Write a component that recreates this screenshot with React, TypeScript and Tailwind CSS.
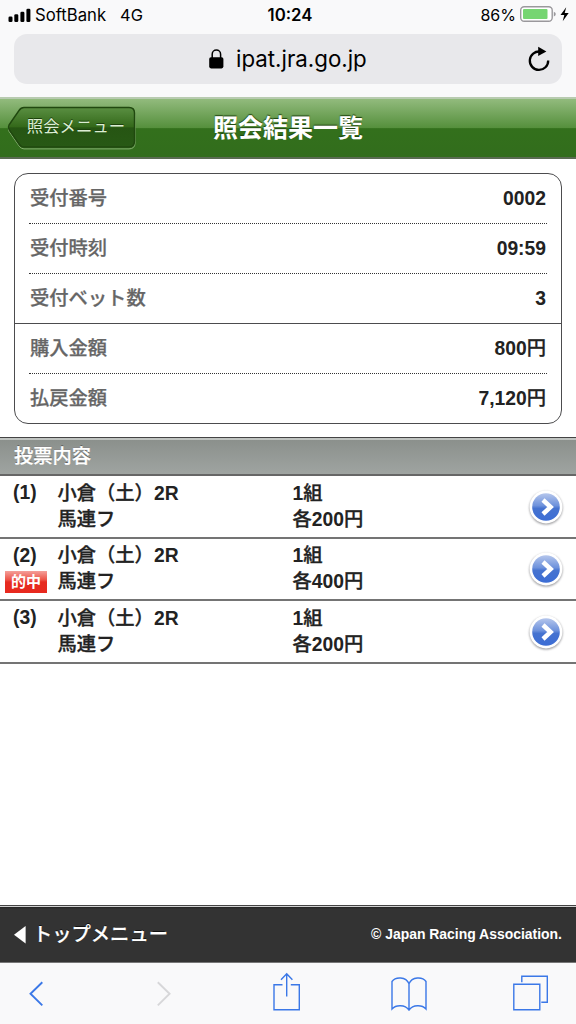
import React from "react";

const details = [
  { label: "受付番号", value: "0002", unit: "", line: "dotted" },
  { label: "受付時刻", value: "09:59", unit: "", line: "dotted" },
  { label: "受付ベット数", value: "3", unit: "", line: "solid" },
  { label: "購入金額", value: "800", unit: "円", line: "dotted" },
  { label: "払戻金額", value: "7,120", unit: "円", line: "none" },
];

const bets = [
  { no: "(1)", hit: false, amount: "200" },
  { no: "(2)", hit: true, amount: "400" },
  { no: "(3)", hit: false, amount: "200" },
];

function StatusBar() {
  return (
    <div className="flex h-[34px] items-start justify-between pl-[8px] pr-[5px] pt-[4px] font-['Inter',sans-serif] text-[17px] leading-[22px] text-black">
      <div className="flex w-[230px] items-center">
        <svg width="23" height="14" viewBox="0 0 23 14" className="-mt-px shrink-0">
          <rect x="0.5" y="8.5" width="4" height="5.5" rx="1.3" />
          <rect x="6.3" y="6.3" width="4" height="7.7" rx="1.3" />
          <rect x="12.4" y="3.8" width="4" height="10.2" rx="1.3" />
          <rect x="18.4" y="0.8" width="4" height="13.2" rx="1.3" />
        </svg>
        <span className="ml-[4px] text-[16.7px]">SoftBank</span>
        <span className="ml-[14px] text-[16.4px]">4G</span>
      </div>
      <span className="pl-px text-[16.8px] font-semibold">10:24</span>
      <div className="flex w-[230px] items-center justify-end">
        <span className="text-[16px]">86%</span>
        <svg width="52" height="20" viewBox="0 0 52 20" className="ml-[3px] shrink-0">
          <rect x="1.7" y="1.7" width="31.5" height="14.6" rx="3.5" fill="#fff" stroke="#9a989c" strokeWidth="1.4" />
          <rect x="4" y="4" width="24.5" height="10" rx="1" fill="#76d572" />
          <path d="M34.8 6.8q2 .6 2 2.3t-2 2.3z" fill="#9a989c" />
          <path d="M47.2 2.3L41.5 10.1h3.8l-1.6 6.2 6-8.2h-4z" fill="#000" />
        </svg>
      </div>
    </div>
  );
}

function AddressBar() {
  return (
    <div className="mx-[14px] flex h-[50px] items-center rounded-[13px] bg-[#e8e8eb] pl-[194.5px] pr-[11px]">
      <svg width="15" height="20" viewBox="0 0 15 20" className="shrink-0">
        <path d="M3.2 9V5.3a4.2 4.2 0 0 1 8.4 0V9" fill="none" stroke="#000" strokeWidth="1.5" />
        <rect x="0.2" y="8.2" width="14.2" height="11.2" rx="1.8" />
      </svg>
      <span className="ml-[12.5px] font-['Inter',sans-serif] text-[22.3px] text-black">ipat.jra.go.jp</span>
      <svg width="24" height="26" viewBox="0 0 24 26" className="ml-auto shrink-0">
        <path d="M13.2 5.6A9.2 9.2 0 1 0 21.2 14.5" fill="none" stroke="#000" strokeWidth="2.3" />
        <path d="M11.2 .8L19.4 5.4 11.2 10z" />
      </svg>
    </div>
  );
}

function TitleBar() {
  return (
    <header className="relative mt-[13px] flex h-[62px] items-center justify-center border-b-2 border-t-2 border-b-[#5a6b52] border-t-[#b8cbb0] bg-[linear-gradient(to_bottom,#92bb7d_0%,#558f3c_50%,#33701c_51%,#326d1c_100%)] pt-px">
      <button className="absolute left-[7px] top-[7px] h-[44px] w-[129px] pl-[9px] text-[16.4px] text-[#dcedd3]">
        <svg width="129" height="44" viewBox="0 0 129 44" className="absolute left-0 top-0">
          <defs>
            <linearGradient id="back" x1="0" y1="0" x2="0" y2="1">
              <stop offset="0" stopColor="#5a8f42" />
              <stop offset=".5" stopColor="#336819" />
              <stop offset=".51" stopColor="#265513" />
              <stop offset="1" stopColor="#285915" />
            </linearGradient>
          </defs>
          <path d="M17 2H122Q128 2 128 8V36Q128 42 122 42H17Q14 42 12 39L2 24.5Q.8 22 2 19.5L12 5Q14 2 17 2Z" transform="translate(0 .9)" fill="none" stroke="#86ae72" strokeWidth="1" />
          <path d="M17 1.5H122Q127.5 1.5 127.5 7V35Q127.5 41 122 41H17Q14 41 12 38L2 23.5Q.8 21 2 19L12 4.5Q14 1.5 17 1.5Z" fill="url(#back)" stroke="#20480f" strokeWidth="1.4" />
        </svg>
        <span className="relative -top-[2px] whitespace-nowrap [text-shadow:0_-1px_0_#1d420d]">照会メニュー</span>
      </button>
      <h1 className="text-[25px] font-bold leading-none text-white [text-shadow:0_-1px_1px_#1d420d]">照会結果一覧</h1>
    </header>
  );
}

function DetailCard() {
  return (
    <section className="mx-[14px] mt-[14px] h-[251px] rounded-[14px] border border-[#4c4c4e]">
      {details.map((row) => (
        <div key={row.label} className={row.line === "solid" ? "h-[50px] border-b border-[#4c4c4e] px-[14px]" : "h-[50px] px-[14px]"}>
          <div className={row.line === "dotted" ? "flex h-[50px] items-center justify-between border-b border-dotted border-[#333] px-px" : "flex h-[50px] items-center justify-between px-px"}>
            <span className="pt-px text-[19.3px] font-medium text-[#666] [-webkit-text-stroke:0.25px_#666]">{row.label}</span>
            <span className="pt-px text-[19.3px] font-bold text-[#222]">{row.value}<span className="font-medium [-webkit-text-stroke:0.3px_#222]">{row.unit}</span></span>
          </div>
        </div>
      ))}
    </section>
  );
}

function NextIcon() {
  return (
    <svg width="40" height="42" viewBox="0 0 40 42" className="ml-auto mr-[10px] mt-[10.5px] shrink-0">
      <defs>
        <linearGradient id="disc" x1="0" y1="0" x2="0" y2="1">
          <stop offset="0" stopColor="#b5c6ec" />
          <stop offset=".45" stopColor="#6e92dc" />
          <stop offset=".55" stopColor="#4673d0" />
          <stop offset="1" stopColor="#3c6dd5" />
        </linearGradient>
        <filter id="shade" x="-20%" y="-20%" width="140%" height="140%">
          <feGaussianBlur stdDeviation="1.1" />
        </filter>
      </defs>
      <circle cx="20" cy="21" r="16.5" fill="#78787c" opacity=".75" filter="url(#shade)" />
      <circle cx="20" cy="20" r="16.4" fill="#fff" />
      <circle cx="20" cy="20" r="13.8" fill="url(#disc)" />
      <path d="M17 13L24.6 20L17 27" fill="none" stroke="#fff" strokeWidth="4.5" />
    </svg>
  );
}

function BetRow({ no, hit, amount }: { no: string; hit: boolean; amount: string }) {
  return (
    <li className="flex h-[62.5px] border-b-2 border-[#747474] text-[19.3px] font-bold leading-[26.3px] text-[#222]">
      <div className="flex w-[57.5px] shrink-0 flex-col pt-[4px]">
        <span className="pl-[13px]">{no}</span>
        {hit && (
          <span className="ml-[5px] mt-[2px] flex h-[22px] w-[42px] items-center justify-center bg-[linear-gradient(to_bottom,#f4a09a_0%,#ed5347_40%,#e62b20_50%,#e8291e_100%)] text-[15px] leading-none text-white">的中</span>
        )}
      </div>
      <div className="w-[235px] shrink-0 pt-[4.5px]">
        <div><span className="font-medium [-webkit-text-stroke:0.35px_#222]">小倉（土）</span>2R</div>
        <div className="font-medium [-webkit-text-stroke:0.35px_#222]">馬連フ</div>
      </div>
      <div className="pt-[4.5px]">
        <div>1<span className="font-medium [-webkit-text-stroke:0.35px_#222]">組</span></div>
        <div><span className="font-medium [-webkit-text-stroke:0.35px_#222]">各</span>{amount}<span className="font-medium [-webkit-text-stroke:0.35px_#222]">円</span></div>
      </div>
      <NextIcon />
    </li>
  );
}

function BrowserToolbar() {
  return (
    <nav className="flex h-[61px] items-start bg-[#f9f9fa] pt-[8px] text-[#3b78e7]">
      <svg width="576" height="50" viewBox="0 0 576 50" fill="none" stroke="currentColor" strokeWidth="1.4">
        <path d="M42.3 11.2L30.5 22.8L42.3 34.4" strokeWidth="1.9" />
        <path d="M157.8 11.2L169.6 22.8L157.8 34.4" stroke="#d7d7d9" strokeWidth="1.9" />
        <path d="M282.5 13.8h-8.5v25h25.3v-25h-8.5M286.7 25.5V2.8M281 8.8l5.7-6 5.7 6" />
        <path d="M409 12.8C406 5.5 395.5 5.5 392 10.5V38C396 33.5 405 33.5 409 39C413 33.5 422 33.5 426 38V10.5C422.5 5.5 412 5.5 409 12.8ZM409 12.8V39" />
        <path d="M513.8 13.2h26v25.6h-26zM521.8 11.2V5.2h25.5v26h-6" />
      </svg>
    </nav>
  );
}

export default function App() {
  return (
    <div className="flex h-[1024px] w-[576px] flex-col overflow-hidden bg-white font-['Liberation_Sans','Noto_Sans_CJK_JP',sans-serif]">
      <div className="bg-[#f9f9fa]">
        <StatusBar />
        <AddressBar />
        <TitleBar />
      </div>
      <main className="flex flex-1 flex-col">
        <DetailCard />
        <h2 className="mt-[13px] flex h-[39px] items-center border-b-2 border-t border-b-[#666] border-t-[#444] bg-[linear-gradient(to_bottom,#bfc3c0_0,#bfc3c0_2px,#8b908c_2px,#9fa4a1_100%)] pl-[14px] pt-[3px] text-[19.3px] font-medium text-white [-webkit-text-stroke:0.3px_#fff] [text-shadow:0_-1px_0_#555]">投票内容</h2>
        <ul>
          {bets.map((bet) => (
            <BetRow key={bet.no} {...bet} />
          ))}
        </ul>
      </main>
      <footer className="flex h-[58px] items-center justify-between border-b border-b-[#777] bg-[linear-gradient(to_bottom,#444_0,#444_1px,#d0d0d0_1px,#d0d0d0_2px,#222_2px,#333_4px,#333_100%)] pl-[14px] pr-[14px] pt-[2px] text-white">
        <a className="flex items-center text-[19.3px] font-medium [text-shadow:0_-1px_0_#111] [-webkit-text-stroke:0.2px_#fff]">
          <svg width="12" height="18" viewBox="0 0 12 18" fill="#fff" className="mr-[7px]">
            <path d="M11.6 0V17.6L0 8.8z" />
          </svg>
          <span className="pt-px">トップメニュー</span>
        </a>
        <small className="text-[13.95px] font-bold">© Japan Racing Association.</small>
      </footer>
      <BrowserToolbar />
    </div>
  );
}
